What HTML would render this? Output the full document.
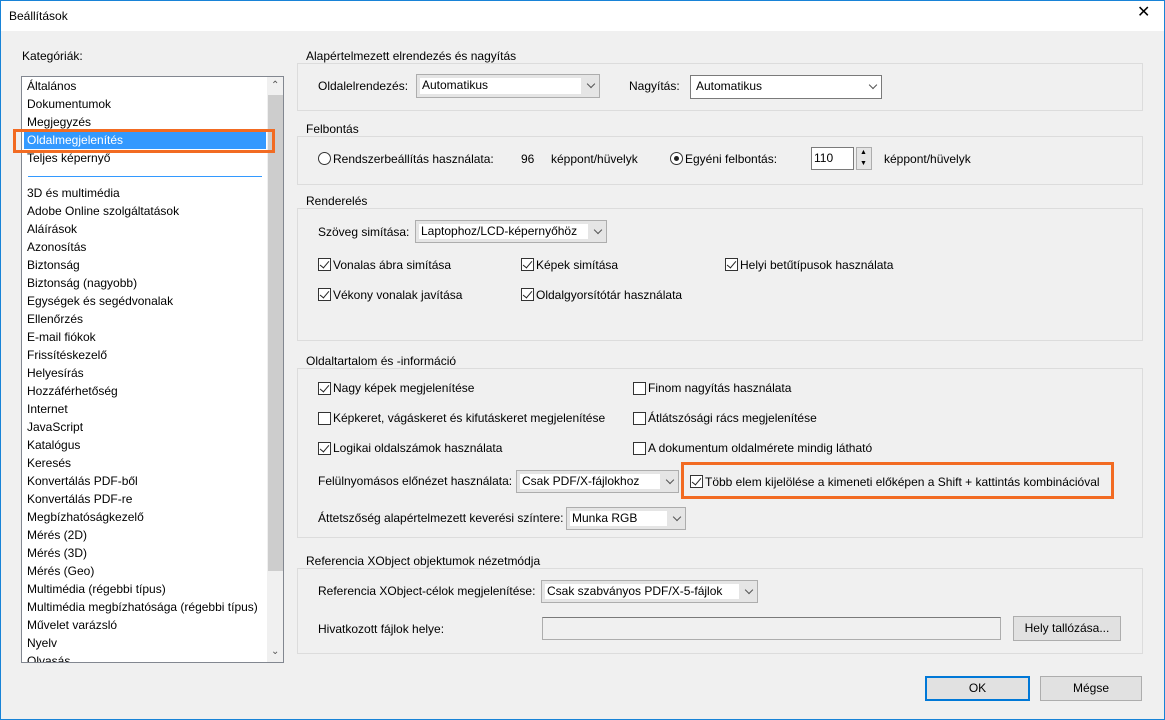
<!DOCTYPE html>
<html><head><meta charset="utf-8"><style>
*{margin:0;padding:0;box-sizing:border-box}
body{width:1165px;height:720px;overflow:hidden;background:#f0f0f0;font-family:"Liberation Sans",sans-serif;font-size:12px;color:#000;position:relative}
.win{position:absolute;left:0;top:0;width:1165px;height:720px;border:1px solid #1883d7}
.title{position:absolute;left:1px;top:1px;width:1163px;height:30px;background:#fff}
.a{position:absolute;white-space:nowrap;line-height:14px}
.grp{position:absolute;border:1px solid #dcdcdc}
.gt{position:absolute;background:#f0f0f0;padding:0 2px;line-height:14px;white-space:nowrap}
.sel{position:absolute;border:1px solid #adadad;background:#e5e5e5}
.sel .in{position:absolute;left:3px;top:3px;bottom:3px;right:18px;background:#fff;padding-left:2px;line-height:15px}
.sel .ar{position:absolute;right:5px;top:6px;width:6px;height:6px;border-right:1px solid #555;border-bottom:1px solid #555;transform:rotate(45deg)}
.cb{position:absolute;width:13px;height:13px;border:1px solid #333;background:#fff}
.cb.on::after{content:"";position:absolute;left:3px;top:0px;width:4px;height:8px;border-right:1.5px solid #222;border-bottom:1.5px solid #222;transform:rotate(40deg)}
.rb{position:absolute;width:13px;height:13px;border:1px solid #333;border-radius:50%;background:#fff}
.btn{position:absolute;border:1px solid #adadad;background:#e1e1e1;text-align:center;line-height:22px}
.list{position:absolute;left:21px;top:76px;width:263px;height:587px;border:1px solid #828790;background:#fff;overflow:hidden}
.li{position:absolute;left:5px;line-height:18px;white-space:nowrap}
</style></head><body>
<div class="win"></div>
<div class="title"></div>
<div class="a" style="left:9px;top:9px">Beállítások</div>
<div class="a" style="left:1137px;top:6px;font-size:16px">✕</div>

<div class="a" style="left:22px;top:49px">Kategóriák:</div>
<div class="list">
<div style="position:absolute;left:2px;top:54px;width:242px;height:18px;background:#3399ff"></div>
<div class="li" style="top:0">Általános</div>
<div class="li" style="top:18px">Dokumentumok</div>
<div class="li" style="top:36px">Megjegyzés</div>
<div class="li" style="top:54px;color:#fff">Oldalmegjelenítés</div>
<div class="li" style="top:72px">Teljes képernyő</div>
<div style="position:absolute;left:6px;top:99px;width:234px;height:1px;background:#3399ff"></div>
<div class="li" style="top:107px">3D és multimédia</div>
<div class="li" style="top:125px">Adobe Online szolgáltatások</div>
<div class="li" style="top:143px">Aláírások</div>
<div class="li" style="top:161px">Azonosítás</div>
<div class="li" style="top:179px">Biztonság</div>
<div class="li" style="top:197px">Biztonság (nagyobb)</div>
<div class="li" style="top:215px">Egységek és segédvonalak</div>
<div class="li" style="top:233px">Ellenőrzés</div>
<div class="li" style="top:251px">E-mail fiókok</div>
<div class="li" style="top:269px">Frissítéskezelő</div>
<div class="li" style="top:287px">Helyesírás</div>
<div class="li" style="top:305px">Hozzáférhetőség</div>
<div class="li" style="top:323px">Internet</div>
<div class="li" style="top:341px">JavaScript</div>
<div class="li" style="top:359px">Katalógus</div>
<div class="li" style="top:377px">Keresés</div>
<div class="li" style="top:395px">Konvertálás PDF-ből</div>
<div class="li" style="top:413px">Konvertálás PDF-re</div>
<div class="li" style="top:431px">Megbízhatóságkezelő</div>
<div class="li" style="top:449px">Mérés (2D)</div>
<div class="li" style="top:467px">Mérés (3D)</div>
<div class="li" style="top:485px">Mérés (Geo)</div>
<div class="li" style="top:503px">Multimédia (régebbi típus)</div>
<div class="li" style="top:521px">Multimédia megbízhatósága (régebbi típus)</div>
<div class="li" style="top:539px">Művelet varázsló</div>
<div class="li" style="top:557px">Nyelv</div>
<div class="li" style="top:575px">Olvasás</div>
<div style="position:absolute;left:245px;top:0;width:17px;height:585px;background:#f0f0f0"></div>
<div style="position:absolute;left:246px;top:18px;width:15px;height:476px;background:#cdcdcd"></div>
<div class="a" style="left:249px;top:2px;font-size:10px;color:#555">&#8963;</div>
<div class="a" style="left:249px;top:568px;font-size:10px;color:#555">&#8964;</div>
</div>
<div style="position:absolute;left:13px;top:129px;width:262px;height:24px;border:3px solid #f26b22"></div>

<!-- group 1 -->
<div class="grp" style="left:297px;top:63px;width:846px;height:48px"></div>
<div class="gt" style="left:304px;top:49px">Alapértelmezett elrendezés és nagyítás</div>
<div class="a" style="left:318px;top:79px">Oldalelrendezés:</div>
<div class="sel" style="left:416px;top:74px;width:184px;height:24px"><div class="in">Automatikus</div><div class="ar"></div></div>
<div class="a" style="left:629px;top:79px">Nagyítás:</div>
<div class="sel" style="left:690px;top:75px;width:192px;height:24px;border-color:#7a7a7a;background:#fff"><div class="in">Automatikus</div><div class="ar"></div></div>

<!-- group 2 -->
<div class="grp" style="left:297px;top:136px;width:846px;height:49px"></div>
<div class="gt" style="left:304px;top:122px">Felbontás</div>
<div class="rb" style="left:318px;top:152px"></div>
<div class="a" style="left:333px;top:152px">Rendszerbeállítás használata:</div>
<div class="a" style="left:521px;top:152px">96</div>
<div class="a" style="left:551px;top:152px">képpont/hüvelyk</div>
<div class="rb" style="left:670px;top:152px"><div style="position:absolute;left:3px;top:3px;width:5px;height:5px;border-radius:50%;background:#222"></div></div>
<div class="a" style="left:685px;top:152px">Egyéni felbontás:</div>
<div style="position:absolute;left:811px;top:147px;width:43px;height:23px;border:1px solid #7a7a7a;background:#fff;padding:3px 2px;line-height:15px">110</div>
<div style="position:absolute;left:856px;top:147px;width:16px;height:23px;border:1px solid #adadad;background:#e5e5e5"><div class="a" style="left:3px;top:-2px;font-size:7px">▲</div><div class="a" style="left:3px;top:9px;font-size:7px">▼</div></div>
<div class="a" style="left:884px;top:152px">képpont/hüvelyk</div>

<!-- group 3 -->
<div class="grp" style="left:297px;top:208px;width:846px;height:133px"></div>
<div class="gt" style="left:304px;top:194px">Renderelés</div>
<div class="a" style="left:318px;top:225px">Szöveg simítása:</div>
<div class="sel" style="left:415px;top:220px;width:192px;height:23px"><div class="in">Laptophoz/LCD-képernyőhöz</div><div class="ar"></div></div>
<div class="cb on" style="left:318px;top:258px"></div><div class="a" style="left:333px;top:258px">Vonalas ábra simítása</div>
<div class="cb on" style="left:521px;top:258px"></div><div class="a" style="left:536px;top:258px">Képek simítása</div>
<div class="cb on" style="left:725px;top:258px"></div><div class="a" style="left:740px;top:258px">Helyi betűtípusok használata</div>
<div class="cb on" style="left:318px;top:288px"></div><div class="a" style="left:333px;top:288px">Vékony vonalak javítása</div>
<div class="cb on" style="left:521px;top:288px"></div><div class="a" style="left:536px;top:288px">Oldalgyorsítótár használata</div>

<!-- group 4 -->
<div class="grp" style="left:297px;top:368px;width:846px;height:170px"></div>
<div class="gt" style="left:304px;top:354px">Oldaltartalom és -információ</div>
<div class="cb on" style="left:318px;top:382px"></div><div class="a" style="left:333px;top:381px">Nagy képek megjelenítése</div>
<div class="cb" style="left:633px;top:382px"></div><div class="a" style="left:648px;top:381px">Finom nagyítás használata</div>
<div class="cb" style="left:318px;top:412px"></div><div class="a" style="left:333px;top:411px">Képkeret, vágáskeret és kifutáskeret megjelenítése</div>
<div class="cb" style="left:633px;top:412px"></div><div class="a" style="left:648px;top:411px">Átlátszósági rács megjelenítése</div>
<div class="cb on" style="left:318px;top:442px"></div><div class="a" style="left:333px;top:441px">Logikai oldalszámok használata</div>
<div class="cb" style="left:633px;top:442px"></div><div class="a" style="left:648px;top:441px">A dokumentum oldalmérete mindig látható</div>
<div class="a" style="left:318px;top:474px">Felülnyomásos előnézet használata:</div>
<div class="sel" style="left:516px;top:470px;width:163px;height:23px"><div class="in">Csak PDF/X-fájlokhoz</div><div class="ar"></div></div>
<div style="position:absolute;left:681px;top:462px;width:433px;height:37px;border:3px solid #f26b22"></div>
<div class="cb on" style="left:690px;top:475px"></div><div class="a" style="left:705px;top:475px">Több elem kijelölése a kimeneti előképen a Shift + kattintás kombinációval</div>
<div class="a" style="left:318px;top:511px">Áttetszőség alapértelmezett keverési színtere:</div>
<div class="sel" style="left:566px;top:507px;width:120px;height:23px"><div class="in">Munka RGB</div><div class="ar"></div></div>

<!-- group 5 -->
<div class="grp" style="left:297px;top:568px;width:846px;height:86px"></div>
<div class="gt" style="left:304px;top:554px">Referencia XObject objektumok nézetmódja</div>
<div class="a" style="left:318px;top:584px">Referencia XObject-célok megjelenítése:</div>
<div class="sel" style="left:541px;top:580px;width:217px;height:23px"><div class="in">Csak szabványos PDF/X-5-fájlok</div><div class="ar"></div></div>
<div class="a" style="left:318px;top:622px">Hivatkozott fájlok helye:</div>
<div style="position:absolute;left:542px;top:617px;width:459px;height:23px;border:1px solid #adadad;border-top-color:#7a7a7a;background:#f0f0f0"></div>
<div class="btn" style="left:1013px;top:616px;width:108px;height:25px">Hely tallózása...</div>

<div class="btn" style="left:925px;top:676px;width:105px;height:25px;border:2px solid #0078d7;line-height:21px">OK</div>
<div class="btn" style="left:1040px;top:676px;width:102px;height:25px">Mégse</div>
</body></html>
